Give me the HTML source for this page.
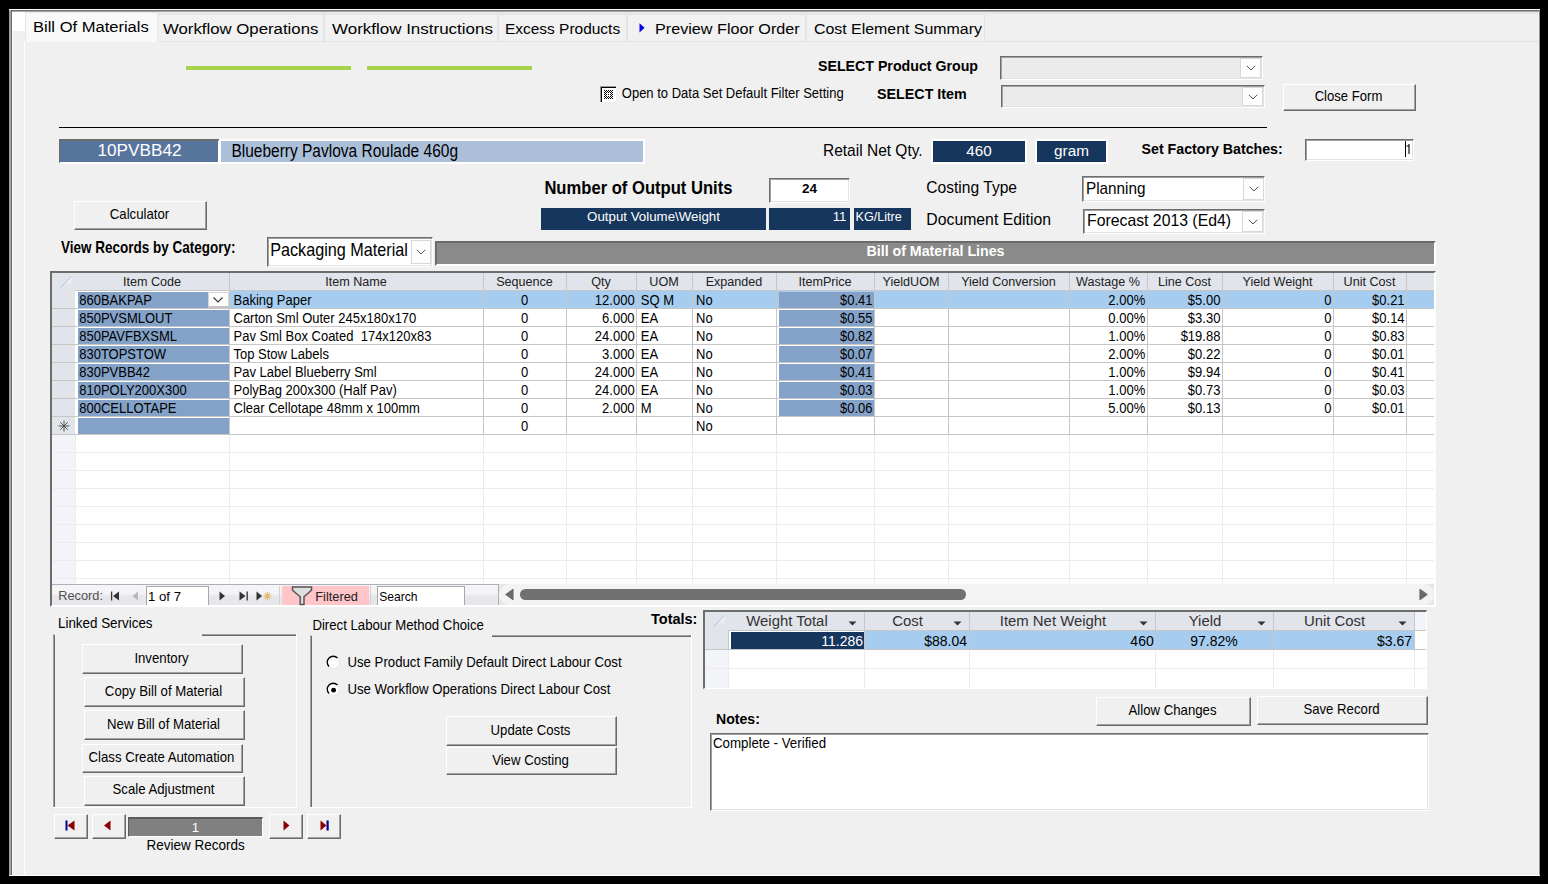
<!DOCTYPE html><html><head><meta charset="utf-8"><style>
html,body{margin:0;padding:0}
body{width:1548px;height:884px;background:#000;position:relative;overflow:hidden;font-family:"Liberation Sans",sans-serif;color:#000}
.a{position:absolute}
.t{position:absolute;white-space:nowrap;line-height:1}
</style></head><body>
<div class="a" style="left:9px;top:9px;width:1531px;height:867px;background:#f0f0f0"></div>
<div class="a" style="left:9px;top:9px;width:1531px;height:1px;background:#fff"></div>
<div class="a" style="left:9px;top:10px;width:1531px;height:1px;background:#6e6e6e"></div>
<div class="a" style="left:9px;top:11px;width:1531px;height:1px;background:#a8a8a8"></div>
<div class="a" style="left:12px;top:12px;width:1527px;height:3px;background:linear-gradient(#e4e4e4,#f0f0f0)"></div>
<div class="a" style="left:9px;top:10px;width:2px;height:866px;background:#a0a0a0"></div>
<div class="a" style="left:11px;top:11px;width:1px;height:865px;background:#6d6d6d"></div>
<div class="a" style="left:12px;top:12px;width:1px;height:863px;background:#f8f8f8"></div>
<div class="a" style="left:1538px;top:12px;width:1px;height:863px;background:#f6f6f6"></div>
<div class="a" style="left:1539px;top:10px;width:1px;height:866px;background:#8c8c8c"></div>
<div class="a" style="left:9px;top:875px;width:1531px;height:1px;background:#fff"></div>
<div class="a" style="left:12px;top:12px;width:13px;height:19px;background:#fff"></div>
<div class="a" style="left:24px;top:41px;width:1515px;height:1px;background:#e3e3e3"></div>
<div class="a" style="left:24px;top:41px;width:1px;height:834px;background:#fff"></div>
<div class="a" style="left:157px;top:14px;width:167px;height:27px;box-sizing:border-box;background:#f1f1f1;border:1px solid #e3e3e3;border-bottom:none"></div>
<div class="t" style="left:162.8px;top:20.03px;font-size:16.2px;transform:scale(1.0363,0.9500);transform-origin:0 13.77px">Workflow Operations</div>
<div class="a" style="left:324px;top:14px;width:174px;height:27px;box-sizing:border-box;background:#f1f1f1;border:1px solid #e3e3e3;border-bottom:none"></div>
<div class="t" style="left:331.7px;top:20.03px;font-size:16.2px;transform:scale(1.0479,0.9500);transform-origin:0 13.77px">Workflow Instructions</div>
<div class="a" style="left:498px;top:14px;width:129px;height:27px;box-sizing:border-box;background:#f1f1f1;border:1px solid #e3e3e3;border-bottom:none"></div>
<div class="t" style="left:505.2px;top:20.03px;font-size:16.2px;transform:scale(0.9549,0.9500);transform-origin:0 13.77px">Excess Products</div>
<div class="a" style="left:627px;top:14px;width:179px;height:27px;box-sizing:border-box;background:#f1f1f1;border:1px solid #e3e3e3;border-bottom:none"></div>
<div class="t" style="left:655.3px;top:20.03px;font-size:16.2px;transform:scale(0.9991,0.9500);transform-origin:0 13.77px">Preview Floor Order</div>
<div class="a" style="left:806px;top:14px;width:179px;height:27px;box-sizing:border-box;background:#f1f1f1;border:1px solid #e3e3e3;border-bottom:none"></div>
<div class="t" style="left:813.6px;top:20.03px;font-size:16.2px;transform:scale(0.9822,0.9500);transform-origin:0 13.77px">Cost Element Summary</div>
<svg class="a" style="left:638.5px;top:22.5px" width="7" height="10"><path d="M0.5 0.3 L5.6 4.8 L0.5 9.4 Z" fill="#0000f0"/></svg>
<div class="a" style="left:25px;top:12px;width:133px;height:30px;box-sizing:border-box;background:#f9f9f9;border:1px solid #e6e6e6;border-bottom:none"></div>
<div class="t" style="left:32.9px;top:18.03px;font-size:16.2px;transform:scale(1.0210,0.9500);transform-origin:0 13.77px">Bill Of Materials</div>
<div class="a" style="left:186px;top:66px;width:165px;height:4px;background:#a6d24c"></div>
<div class="a" style="left:367px;top:66px;width:165px;height:4px;background:#a6d24c"></div>
<div class="t" style="left:818px;top:58.93px;font-size:14.2px;font-weight:bold;transform:scale(1.0000,1.0900);transform-origin:0 12.07px">SELECT Product Group</div>
<div class="a" style="left:1000px;top:56px;width:263px;height:24px;box-sizing:border-box;background:#ebebeb;border-top:1px solid #6d6d6d;border-left:1px solid #6d6d6d;border-right:1px solid #fff;border-bottom:1px solid #fff;box-shadow:inset 1px 1px 0 #a0a0a0,inset -1px -1px 0 #e3e3e3"></div>
<div class="a" style="left:1240px;top:58px;width:21px;height:20px;box-sizing:border-box;background:#fdfdfd;border:1px solid #d9d9d9"></div>
<svg class="a" style="left:1245.5px;top:65.0px" width="10" height="6"><path d="M0.8 0.8 L5 5 L9.2 0.8" fill="none" stroke="#555" stroke-width="1"/></svg>
<div class="a" style="left:600px;top:86px;width:16px;height:16px;box-sizing:border-box;background:#fff;border-top:1px solid #9a9a9a;border-left:1px solid #9a9a9a;box-shadow:inset 1px 1px 0 #000"></div>
<svg class="a" style="left:604px;top:90px" width="9" height="9" fill="#000"><rect x="0" y="0" width="1" height="1"/><rect x="0" y="2" width="1" height="1"/><rect x="0" y="4" width="1" height="1"/><rect x="0" y="6" width="1" height="1"/><rect x="0" y="8" width="1" height="1"/><rect x="1" y="1" width="1" height="1"/><rect x="1" y="3" width="1" height="1"/><rect x="1" y="5" width="1" height="1"/><rect x="1" y="7" width="1" height="1"/><rect x="2" y="0" width="1" height="1"/><rect x="2" y="2" width="1" height="1"/><rect x="2" y="4" width="1" height="1"/><rect x="2" y="6" width="1" height="1"/><rect x="2" y="8" width="1" height="1"/><rect x="3" y="1" width="1" height="1"/><rect x="3" y="7" width="1" height="1"/><rect x="4" y="0" width="1" height="1"/><rect x="4" y="2" width="1" height="1"/><rect x="4" y="4" width="1" height="1"/><rect x="4" y="6" width="1" height="1"/><rect x="4" y="8" width="1" height="1"/><rect x="5" y="1" width="1" height="1"/><rect x="5" y="7" width="1" height="1"/><rect x="6" y="0" width="1" height="1"/><rect x="6" y="2" width="1" height="1"/><rect x="6" y="4" width="1" height="1"/><rect x="6" y="6" width="1" height="1"/><rect x="6" y="8" width="1" height="1"/><rect x="7" y="1" width="1" height="1"/><rect x="7" y="3" width="1" height="1"/><rect x="7" y="5" width="1" height="1"/><rect x="7" y="7" width="1" height="1"/><rect x="8" y="0" width="1" height="1"/><rect x="8" y="2" width="1" height="1"/><rect x="8" y="4" width="1" height="1"/><rect x="8" y="6" width="1" height="1"/><rect x="8" y="8" width="1" height="1"/></svg>
<div class="t" style="left:621.8px;top:87.45px;font-size:13.0px;transform:scale(1.0000,1.1000);transform-origin:0 11.05px">Open to Data Set Default Filter Setting</div>
<div class="t" style="left:877px;top:87.34px;font-size:14.3px;font-weight:bold;transform:scale(1.0000,1.0300);transform-origin:0 12.16px">SELECT Item</div>
<div class="a" style="left:1001px;top:85px;width:264px;height:23px;box-sizing:border-box;background:#ebebeb;border-top:1px solid #6d6d6d;border-left:1px solid #6d6d6d;border-right:1px solid #fff;border-bottom:1px solid #fff;box-shadow:inset 1px 1px 0 #a0a0a0,inset -1px -1px 0 #e3e3e3"></div>
<div class="a" style="left:1242px;top:87px;width:21px;height:19px;box-sizing:border-box;background:#fdfdfd;border:1px solid #d9d9d9"></div>
<svg class="a" style="left:1247.5px;top:93.5px" width="10" height="6"><path d="M0.8 0.8 L5 5 L9.2 0.8" fill="none" stroke="#555" stroke-width="1"/></svg>
<div class="a" style="left:1283px;top:84px;width:133px;height:27px;box-sizing:border-box;background:#f0f0f0;border-top:1px solid #fff;border-left:1px solid #fff;border-right:1px solid #696969;border-bottom:1px solid #696969;box-shadow:inset -1px -1px 0 #a0a0a0"></div>
<div class="t" style="left:1283px;width:131px;text-align:center;top:90.06px;font-size:13.1px;transform:scale(1.0000,1.1000);transform-origin:50% 11.13px">Close Form</div>
<div class="a" style="left:59px;top:127px;width:1208px;height:1px;background:#000"></div>
<div class="a" style="left:59px;top:139px;width:162px;height:25px;box-sizing:border-box;background:#56749c;border-top:2px solid #6d6d6d;border-left:1px solid #6d6d6d;border-bottom:2px solid #fff;border-right:3px solid #fff"></div>
<div class="t" style="left:59px;width:161px;text-align:center;top:142.38px;font-size:17.2px;color:#fff">10PVBB42</div>
<div class="a" style="left:219px;top:139px;width:426px;height:25px;box-sizing:border-box;background:#abbfd9;border:2px solid #fff"></div>
<div class="t" style="left:231.4px;top:144.12px;font-size:15.5px;transform:scale(1.0000,1.1300);transform-origin:0 13.17px">Blueberry Pavlova Roulade 460g</div>
<div class="t" style="left:823px;top:142.82px;font-size:15.5px;transform:scale(1.0000,1.1100);transform-origin:0 13.17px">Retail Net Qty.</div>
<div class="a" style="left:931px;top:139px;width:96px;height:25px;box-sizing:border-box;background:#17365d;border:2px solid #fff"></div>
<div class="t" style="left:931px;width:96px;text-align:center;top:143.48px;font-size:15.2px;color:#fff">460</div>
<div class="a" style="left:1035px;top:139px;width:73px;height:25px;box-sizing:border-box;background:#17365d;border:2px solid #fff"></div>
<div class="t" style="left:1035px;width:73px;text-align:center;top:143.40px;font-size:15.3px;color:#fff">gram</div>
<div class="t" style="left:1141.6px;top:142.43px;font-size:14.2px;font-weight:bold;transform:scale(1.0000,1.0400);transform-origin:0 12.07px">Set Factory Batches:</div>
<div class="a" style="left:1305px;top:139px;width:109px;height:22px;box-sizing:border-box;background:#fff;border-top:1px solid #6d6d6d;border-left:1px solid #6d6d6d;border-right:1px solid #fff;border-bottom:1px solid #fff;box-shadow:inset 1px 1px 0 #a0a0a0,inset -1px -1px 0 #e3e3e3"></div>
<div class="a" style="left:1405px;top:141px;width:1px;height:16px;background:#000"></div>
<svg class="a" style="left:1404px;top:143px" width="8" height="13"><path d="M5 1 V11 M2.5 3 H5" stroke="#000" stroke-width="1.1" fill="none"/></svg>
<div class="t" style="left:544.4px;top:181.09px;font-size:16.6px;font-weight:bold;transform:scale(1.0000,1.0600);transform-origin:0 14.11px">Number of Output Units</div>
<div class="a" style="left:769px;top:178px;width:81px;height:25px;box-sizing:border-box;background:#fff;border-top:1px solid #6d6d6d;border-left:1px solid #6d6d6d;border-right:1px solid #fff;border-bottom:1px solid #fff;box-shadow:inset 1px 1px 0 #a0a0a0,inset -1px -1px 0 #e3e3e3"></div>
<div class="t" style="left:769px;width:81px;text-align:center;top:181.72px;font-size:13.5px;font-weight:bold">24</div>
<div class="a" style="left:541px;top:208px;width:225px;height:22px;background:#17365d"></div>
<div class="t" style="left:541px;width:225px;text-align:center;top:209.69px;font-size:13.3px;color:#fff">Output Volume\Weight</div>
<div class="a" style="left:769px;top:208px;width:81px;height:22px;background:#17365d"></div>
<div class="t" style="right:701.5px;top:209.69px;font-size:13.3px;color:#fff">11</div>
<div class="a" style="left:854px;top:208px;width:57px;height:22px;background:#17365d"></div>
<div class="t" style="left:855.5px;top:211.09px;font-size:12.6px;color:#fff">KG/Litre</div>
<div class="t" style="left:926.3px;top:179.94px;font-size:15.6px;transform:scale(1.0000,1.0400);transform-origin:0 13.26px">Costing Type</div>
<div class="t" style="left:926.3px;top:212.27px;font-size:15.8px;transform:scale(1.0000,1.0500);transform-origin:0 13.43px">Document Edition</div>
<div class="a" style="left:1082px;top:176px;width:183px;height:26px;box-sizing:border-box;background:#fff;border-top:1px solid #6d6d6d;border-left:1px solid #6d6d6d;border-right:1px solid #fff;border-bottom:1px solid #fff;box-shadow:inset 1px 1px 0 #a0a0a0,inset -1px -1px 0 #e3e3e3"></div>
<div class="t" style="left:1086px;top:180.90px;font-size:15.3px;transform:scale(1.0000,1.0300);transform-origin:0 13.01px">Planning</div>
<div class="a" style="left:1243px;top:178px;width:21px;height:22px;box-sizing:border-box;background:#fdfdfd;border:1px solid #d9d9d9"></div>
<svg class="a" style="left:1248.5px;top:186.0px" width="10" height="6"><path d="M0.8 0.8 L5 5 L9.2 0.8" fill="none" stroke="#555" stroke-width="1"/></svg>
<div class="a" style="left:1083px;top:209px;width:182px;height:25px;box-sizing:border-box;background:#fff;border-top:1px solid #6d6d6d;border-left:1px solid #6d6d6d;border-right:1px solid #fff;border-bottom:1px solid #fff;box-shadow:inset 1px 1px 0 #a0a0a0,inset -1px -1px 0 #e3e3e3"></div>
<div class="t" style="left:1087px;top:212.77px;font-size:15.8px;transform:scale(1.0000,1.0300);transform-origin:0 13.43px">Forecast 2013 (Ed4)</div>
<div class="a" style="left:1242px;top:211px;width:21px;height:21px;box-sizing:border-box;background:#fdfdfd;border:1px solid #d9d9d9"></div>
<svg class="a" style="left:1247.5px;top:218.5px" width="10" height="6"><path d="M0.8 0.8 L5 5 L9.2 0.8" fill="none" stroke="#555" stroke-width="1"/></svg>
<div class="a" style="left:74px;top:201px;width:133px;height:29px;box-sizing:border-box;background:#f0f0f0;border-top:1px solid #fff;border-left:1px solid #fff;border-right:1px solid #696969;border-bottom:1px solid #696969;box-shadow:inset -1px -1px 0 #a0a0a0"></div>
<div class="t" style="left:74px;width:131px;text-align:center;top:207.78px;font-size:13.2px;transform:scale(1.0000,1.0700);transform-origin:50% 11.22px">Calculator</div>
<div class="t" style="left:61px;top:241.53px;font-size:13.5px;font-weight:bold;transform:scale(1.0000,1.1800);transform-origin:0 11.47px">View Records by Category:</div>
<div class="a" style="left:267px;top:237px;width:166px;height:30px;box-sizing:border-box;background:#fff;border-top:1px solid #6d6d6d;border-left:1px solid #6d6d6d;border-right:1px solid #fff;border-bottom:1px solid #fff;box-shadow:inset 1px 1px 0 #a0a0a0,inset -1px -1px 0 #e3e3e3"></div>
<div class="t" style="left:270.2px;top:241.93px;font-size:16.2px;transform:scale(1.0000,1.0800);transform-origin:0 13.77px">Packaging Material</div>
<div class="a" style="left:411px;top:240px;width:20px;height:24px;box-sizing:border-box;background:#fdfdfd;border:1px solid #d9d9d9"></div>
<svg class="a" style="left:416.0px;top:249.0px" width="10" height="6"><path d="M0.8 0.8 L5 5 L9.2 0.8" fill="none" stroke="#555" stroke-width="1"/></svg>
<div class="a" style="left:435px;top:241px;width:1001px;height:25px;box-sizing:border-box;background:#8a8a8a;border-top:2px solid #6a6a6a;border-left:2px solid #6a6a6a;border-bottom:2px solid #fff;border-right:2px solid #fff"></div>
<div class="t" style="left:435px;width:1001px;text-align:center;top:243.93px;font-size:14.2px;font-weight:bold;color:#fff;transform:scale(1.0000,1.0500);transform-origin:50% 12.07px">Bill of Material Lines</div>
<div class="a" style="left:50px;top:271px;width:1386px;height:336px;box-sizing:border-box;background:#fff;border-top:2px solid #6d6d6d;border-left:2px solid #6d6d6d;border-right:2px solid #fff;border-bottom:2px solid #fff"></div>
<div class="a" style="left:52px;top:273px;width:1382px;height:17px;background:#e1e4ea"></div>
<div class="a" style="left:52px;top:290px;width:23px;height:144px;background:#e1e4ea"></div>
<div class="a" style="left:52px;top:435px;width:23px;height:149px;background:#f3f4fa"></div>
<div class="a" style="left:229px;top:291px;width:1205px;height:17px;background:#a6cdf0"></div>
<div class="a" style="left:75px;top:290px;width:1359px;height:1px;background:#c6c6c6"></div>
<div class="a" style="left:52px;top:308px;width:1382px;height:1px;background:#c6c6c6"></div>
<div class="a" style="left:52px;top:326px;width:1382px;height:1px;background:#c6c6c6"></div>
<div class="a" style="left:52px;top:344px;width:1382px;height:1px;background:#c6c6c6"></div>
<div class="a" style="left:52px;top:362px;width:1382px;height:1px;background:#c6c6c6"></div>
<div class="a" style="left:52px;top:380px;width:1382px;height:1px;background:#c6c6c6"></div>
<div class="a" style="left:52px;top:398px;width:1382px;height:1px;background:#c6c6c6"></div>
<div class="a" style="left:52px;top:416px;width:1382px;height:1px;background:#c6c6c6"></div>
<div class="a" style="left:52px;top:434px;width:1382px;height:1px;background:#c6c6c6"></div>
<div class="a" style="left:52px;top:452px;width:1382px;height:1px;background:#ececec"></div>
<div class="a" style="left:52px;top:470px;width:1382px;height:1px;background:#ececec"></div>
<div class="a" style="left:52px;top:488px;width:1382px;height:1px;background:#ececec"></div>
<div class="a" style="left:52px;top:506px;width:1382px;height:1px;background:#ececec"></div>
<div class="a" style="left:52px;top:524px;width:1382px;height:1px;background:#ececec"></div>
<div class="a" style="left:52px;top:542px;width:1382px;height:1px;background:#ececec"></div>
<div class="a" style="left:52px;top:560px;width:1382px;height:1px;background:#ececec"></div>
<div class="a" style="left:52px;top:578px;width:1382px;height:1px;background:#ececec"></div>
<div class="a" style="left:229px;top:273px;width:1px;height:161px;background:#c6c6c6"></div>
<div class="a" style="left:483px;top:273px;width:1px;height:161px;background:#c6c6c6"></div>
<div class="a" style="left:566px;top:273px;width:1px;height:161px;background:#c6c6c6"></div>
<div class="a" style="left:636px;top:273px;width:1px;height:161px;background:#c6c6c6"></div>
<div class="a" style="left:692px;top:273px;width:1px;height:161px;background:#c6c6c6"></div>
<div class="a" style="left:776px;top:273px;width:1px;height:161px;background:#c6c6c6"></div>
<div class="a" style="left:874px;top:273px;width:1px;height:161px;background:#c6c6c6"></div>
<div class="a" style="left:948px;top:273px;width:1px;height:161px;background:#c6c6c6"></div>
<div class="a" style="left:1069px;top:273px;width:1px;height:161px;background:#c6c6c6"></div>
<div class="a" style="left:1147px;top:273px;width:1px;height:161px;background:#c6c6c6"></div>
<div class="a" style="left:1222px;top:273px;width:1px;height:161px;background:#c6c6c6"></div>
<div class="a" style="left:1333px;top:273px;width:1px;height:161px;background:#c6c6c6"></div>
<div class="a" style="left:1406px;top:273px;width:1px;height:161px;background:#c6c6c6"></div>
<div class="a" style="left:75px;top:290px;width:1px;height:144px;background:#c6c6c6"></div>
<div class="a" style="left:75px;top:435px;width:1px;height:149px;background:#ececec"></div>
<div class="a" style="left:229px;top:435px;width:1px;height:149px;background:#ececec"></div>
<div class="a" style="left:483px;top:435px;width:1px;height:149px;background:#ececec"></div>
<div class="a" style="left:566px;top:435px;width:1px;height:149px;background:#ececec"></div>
<div class="a" style="left:636px;top:435px;width:1px;height:149px;background:#ececec"></div>
<div class="a" style="left:692px;top:435px;width:1px;height:149px;background:#ececec"></div>
<div class="a" style="left:776px;top:435px;width:1px;height:149px;background:#ececec"></div>
<div class="a" style="left:874px;top:435px;width:1px;height:149px;background:#ececec"></div>
<div class="a" style="left:948px;top:435px;width:1px;height:149px;background:#ececec"></div>
<div class="a" style="left:1069px;top:435px;width:1px;height:149px;background:#ececec"></div>
<div class="a" style="left:1147px;top:435px;width:1px;height:149px;background:#ececec"></div>
<div class="a" style="left:1222px;top:435px;width:1px;height:149px;background:#ececec"></div>
<div class="a" style="left:1333px;top:435px;width:1px;height:149px;background:#ececec"></div>
<div class="a" style="left:1406px;top:435px;width:1px;height:149px;background:#ececec"></div>
<div class="t" style="left:75px;width:154px;text-align:center;top:275.59px;font-size:12.6px;color:#222;transform:scale(1.0000,1.0500);transform-origin:50% 10.71px">Item Code</div>
<div class="t" style="left:229px;width:254px;text-align:center;top:275.59px;font-size:12.6px;color:#222;transform:scale(1.0000,1.0500);transform-origin:50% 10.71px">Item Name</div>
<div class="t" style="left:483px;width:83px;text-align:center;top:275.59px;font-size:12.6px;color:#222;transform:scale(1.0000,1.0500);transform-origin:50% 10.71px">Sequence</div>
<div class="t" style="left:566px;width:70px;text-align:center;top:275.59px;font-size:12.6px;color:#222;transform:scale(1.0000,1.0500);transform-origin:50% 10.71px">Qty</div>
<div class="t" style="left:636px;width:56px;text-align:center;top:275.59px;font-size:12.6px;color:#222;transform:scale(1.0000,1.0500);transform-origin:50% 10.71px">UOM</div>
<div class="t" style="left:692px;width:84px;text-align:center;top:275.59px;font-size:12.6px;color:#222;transform:scale(1.0000,1.0500);transform-origin:50% 10.71px">Expanded</div>
<div class="t" style="left:776px;width:98px;text-align:center;top:275.59px;font-size:12.6px;color:#222;transform:scale(1.0000,1.0500);transform-origin:50% 10.71px">ItemPrice</div>
<div class="t" style="left:874px;width:74px;text-align:center;top:275.59px;font-size:12.6px;color:#222;transform:scale(1.0000,1.0500);transform-origin:50% 10.71px">YieldUOM</div>
<div class="t" style="left:948px;width:121px;text-align:center;top:275.59px;font-size:12.6px;color:#222;transform:scale(1.0000,1.0500);transform-origin:50% 10.71px">Yield Conversion</div>
<div class="t" style="left:1069px;width:78px;text-align:center;top:275.59px;font-size:12.6px;color:#222;transform:scale(1.0000,1.0500);transform-origin:50% 10.71px">Wastage %</div>
<div class="t" style="left:1147px;width:75px;text-align:center;top:275.59px;font-size:12.6px;color:#222;transform:scale(1.0000,1.0500);transform-origin:50% 10.71px">Line Cost</div>
<div class="t" style="left:1222px;width:111px;text-align:center;top:275.59px;font-size:12.6px;color:#222;transform:scale(1.0000,1.0500);transform-origin:50% 10.71px">Yield Weight</div>
<div class="t" style="left:1333px;width:73px;text-align:center;top:275.59px;font-size:12.6px;color:#222;transform:scale(1.0000,1.0500);transform-origin:50% 10.71px">Unit Cost</div>
<svg class="a" style="left:60px;top:276px" width="12" height="12"><defs><linearGradient id="cg" x1="0" y1="0" x2="0" y2="1"><stop offset="0" stop-color="#fbfbfc"/><stop offset="1" stop-color="#dfe2e8"/></linearGradient></defs><path d="M11.5 0.5 L11.5 11 L0.5 11 Z" fill="url(#cg)"/><path d="M11.5 0.5 L0.5 11.5" stroke="#a9c6ee" stroke-width="1"/></svg>
<div class="a" style="left:75px;top:291px;width:154px;height:17px;background:#fff"></div>
<div class="a" style="left:78px;top:292px;width:151px;height:16px;background:#84a2c8"></div>
<div class="a" style="left:779px;top:292px;width:95px;height:16px;background:#84a2c8"></div>
<div class="t" style="left:79.2px;top:293.75px;font-size:13.0px;transform:scale(1.0000,1.0800);transform-origin:0 11.05px">860BAKPAP</div>
<div class="t" style="left:233.5px;top:293.75px;font-size:13.0px;transform:scale(1.0000,1.0800);transform-origin:0 11.05px">Baking Paper</div>
<div class="t" style="left:483px;width:83px;text-align:center;top:293.75px;font-size:13.0px;transform:scale(1.0000,1.0800);transform-origin:50% 11.05px">0</div>
<div class="t" style="right:913.4px;top:293.75px;font-size:13.0px;transform:scale(1.0000,1.0800);transform-origin:100% 11.05px">12.000</div>
<div class="t" style="left:640.8px;top:293.75px;font-size:13.0px;transform:scale(1.0000,1.0800);transform-origin:0 11.05px">SQ M</div>
<div class="t" style="left:696px;top:293.75px;font-size:13.0px;transform:scale(1.0000,1.0800);transform-origin:0 11.05px">No</div>
<div class="t" style="right:675.5px;top:293.75px;font-size:13.0px;transform:scale(1.0000,1.0800);transform-origin:100% 11.05px">$0.41</div>
<div class="t" style="right:402.79999999999995px;top:293.75px;font-size:13.0px;transform:scale(1.0000,1.0800);transform-origin:100% 11.05px">2.00%</div>
<div class="t" style="right:327.5999999999999px;top:293.75px;font-size:13.0px;transform:scale(1.0000,1.0800);transform-origin:100% 11.05px">$5.00</div>
<div class="t" style="right:216.5999999999999px;top:293.75px;font-size:13.0px;transform:scale(1.0000,1.0800);transform-origin:100% 11.05px">0</div>
<div class="t" style="right:143.4000000000001px;top:293.75px;font-size:13.0px;transform:scale(1.0000,1.0800);transform-origin:100% 11.05px">$0.21</div>
<div class="a" style="left:75px;top:309px;width:154px;height:17px;background:#fff"></div>
<div class="a" style="left:78px;top:310px;width:151px;height:16px;background:#84a2c8"></div>
<div class="a" style="left:779px;top:310px;width:95px;height:16px;background:#84a2c8"></div>
<div class="t" style="left:79.2px;top:311.75px;font-size:13.0px;transform:scale(1.0000,1.0800);transform-origin:0 11.05px">850PVSMLOUT</div>
<div class="t" style="left:233.5px;top:311.75px;font-size:13.0px;transform:scale(1.0000,1.0800);transform-origin:0 11.05px">Carton Sml Outer 245x180x170</div>
<div class="t" style="left:483px;width:83px;text-align:center;top:311.75px;font-size:13.0px;transform:scale(1.0000,1.0800);transform-origin:50% 11.05px">0</div>
<div class="t" style="right:913.4px;top:311.75px;font-size:13.0px;transform:scale(1.0000,1.0800);transform-origin:100% 11.05px">6.000</div>
<div class="t" style="left:640.8px;top:311.75px;font-size:13.0px;transform:scale(1.0000,1.0800);transform-origin:0 11.05px">EA</div>
<div class="t" style="left:696px;top:311.75px;font-size:13.0px;transform:scale(1.0000,1.0800);transform-origin:0 11.05px">No</div>
<div class="t" style="right:675.5px;top:311.75px;font-size:13.0px;transform:scale(1.0000,1.0800);transform-origin:100% 11.05px">$0.55</div>
<div class="t" style="right:402.79999999999995px;top:311.75px;font-size:13.0px;transform:scale(1.0000,1.0800);transform-origin:100% 11.05px">0.00%</div>
<div class="t" style="right:327.5999999999999px;top:311.75px;font-size:13.0px;transform:scale(1.0000,1.0800);transform-origin:100% 11.05px">$3.30</div>
<div class="t" style="right:216.5999999999999px;top:311.75px;font-size:13.0px;transform:scale(1.0000,1.0800);transform-origin:100% 11.05px">0</div>
<div class="t" style="right:143.4000000000001px;top:311.75px;font-size:13.0px;transform:scale(1.0000,1.0800);transform-origin:100% 11.05px">$0.14</div>
<div class="a" style="left:75px;top:327px;width:154px;height:17px;background:#fff"></div>
<div class="a" style="left:78px;top:328px;width:151px;height:16px;background:#84a2c8"></div>
<div class="a" style="left:779px;top:328px;width:95px;height:16px;background:#84a2c8"></div>
<div class="t" style="left:79.2px;top:329.75px;font-size:13.0px;transform:scale(1.0000,1.0800);transform-origin:0 11.05px">850PAVFBXSML</div>
<div class="t" style="left:233.5px;top:329.75px;font-size:13.0px;transform:scale(1.0000,1.0800);transform-origin:0 11.05px">Pav Sml Box Coated&nbsp; 174x120x83</div>
<div class="t" style="left:483px;width:83px;text-align:center;top:329.75px;font-size:13.0px;transform:scale(1.0000,1.0800);transform-origin:50% 11.05px">0</div>
<div class="t" style="right:913.4px;top:329.75px;font-size:13.0px;transform:scale(1.0000,1.0800);transform-origin:100% 11.05px">24.000</div>
<div class="t" style="left:640.8px;top:329.75px;font-size:13.0px;transform:scale(1.0000,1.0800);transform-origin:0 11.05px">EA</div>
<div class="t" style="left:696px;top:329.75px;font-size:13.0px;transform:scale(1.0000,1.0800);transform-origin:0 11.05px">No</div>
<div class="t" style="right:675.5px;top:329.75px;font-size:13.0px;transform:scale(1.0000,1.0800);transform-origin:100% 11.05px">$0.82</div>
<div class="t" style="right:402.79999999999995px;top:329.75px;font-size:13.0px;transform:scale(1.0000,1.0800);transform-origin:100% 11.05px">1.00%</div>
<div class="t" style="right:327.5999999999999px;top:329.75px;font-size:13.0px;transform:scale(1.0000,1.0800);transform-origin:100% 11.05px">$19.88</div>
<div class="t" style="right:216.5999999999999px;top:329.75px;font-size:13.0px;transform:scale(1.0000,1.0800);transform-origin:100% 11.05px">0</div>
<div class="t" style="right:143.4000000000001px;top:329.75px;font-size:13.0px;transform:scale(1.0000,1.0800);transform-origin:100% 11.05px">$0.83</div>
<div class="a" style="left:75px;top:345px;width:154px;height:17px;background:#fff"></div>
<div class="a" style="left:78px;top:346px;width:151px;height:16px;background:#84a2c8"></div>
<div class="a" style="left:779px;top:346px;width:95px;height:16px;background:#84a2c8"></div>
<div class="t" style="left:79.2px;top:347.75px;font-size:13.0px;transform:scale(1.0000,1.0800);transform-origin:0 11.05px">830TOPSTOW</div>
<div class="t" style="left:233.5px;top:347.75px;font-size:13.0px;transform:scale(1.0000,1.0800);transform-origin:0 11.05px">Top Stow Labels</div>
<div class="t" style="left:483px;width:83px;text-align:center;top:347.75px;font-size:13.0px;transform:scale(1.0000,1.0800);transform-origin:50% 11.05px">0</div>
<div class="t" style="right:913.4px;top:347.75px;font-size:13.0px;transform:scale(1.0000,1.0800);transform-origin:100% 11.05px">3.000</div>
<div class="t" style="left:640.8px;top:347.75px;font-size:13.0px;transform:scale(1.0000,1.0800);transform-origin:0 11.05px">EA</div>
<div class="t" style="left:696px;top:347.75px;font-size:13.0px;transform:scale(1.0000,1.0800);transform-origin:0 11.05px">No</div>
<div class="t" style="right:675.5px;top:347.75px;font-size:13.0px;transform:scale(1.0000,1.0800);transform-origin:100% 11.05px">$0.07</div>
<div class="t" style="right:402.79999999999995px;top:347.75px;font-size:13.0px;transform:scale(1.0000,1.0800);transform-origin:100% 11.05px">2.00%</div>
<div class="t" style="right:327.5999999999999px;top:347.75px;font-size:13.0px;transform:scale(1.0000,1.0800);transform-origin:100% 11.05px">$0.22</div>
<div class="t" style="right:216.5999999999999px;top:347.75px;font-size:13.0px;transform:scale(1.0000,1.0800);transform-origin:100% 11.05px">0</div>
<div class="t" style="right:143.4000000000001px;top:347.75px;font-size:13.0px;transform:scale(1.0000,1.0800);transform-origin:100% 11.05px">$0.01</div>
<div class="a" style="left:75px;top:363px;width:154px;height:17px;background:#fff"></div>
<div class="a" style="left:78px;top:364px;width:151px;height:16px;background:#84a2c8"></div>
<div class="a" style="left:779px;top:364px;width:95px;height:16px;background:#84a2c8"></div>
<div class="t" style="left:79.2px;top:365.75px;font-size:13.0px;transform:scale(1.0000,1.0800);transform-origin:0 11.05px">830PVBB42</div>
<div class="t" style="left:233.5px;top:365.75px;font-size:13.0px;transform:scale(1.0000,1.0800);transform-origin:0 11.05px">Pav Label Blueberry Sml</div>
<div class="t" style="left:483px;width:83px;text-align:center;top:365.75px;font-size:13.0px;transform:scale(1.0000,1.0800);transform-origin:50% 11.05px">0</div>
<div class="t" style="right:913.4px;top:365.75px;font-size:13.0px;transform:scale(1.0000,1.0800);transform-origin:100% 11.05px">24.000</div>
<div class="t" style="left:640.8px;top:365.75px;font-size:13.0px;transform:scale(1.0000,1.0800);transform-origin:0 11.05px">EA</div>
<div class="t" style="left:696px;top:365.75px;font-size:13.0px;transform:scale(1.0000,1.0800);transform-origin:0 11.05px">No</div>
<div class="t" style="right:675.5px;top:365.75px;font-size:13.0px;transform:scale(1.0000,1.0800);transform-origin:100% 11.05px">$0.41</div>
<div class="t" style="right:402.79999999999995px;top:365.75px;font-size:13.0px;transform:scale(1.0000,1.0800);transform-origin:100% 11.05px">1.00%</div>
<div class="t" style="right:327.5999999999999px;top:365.75px;font-size:13.0px;transform:scale(1.0000,1.0800);transform-origin:100% 11.05px">$9.94</div>
<div class="t" style="right:216.5999999999999px;top:365.75px;font-size:13.0px;transform:scale(1.0000,1.0800);transform-origin:100% 11.05px">0</div>
<div class="t" style="right:143.4000000000001px;top:365.75px;font-size:13.0px;transform:scale(1.0000,1.0800);transform-origin:100% 11.05px">$0.41</div>
<div class="a" style="left:75px;top:381px;width:154px;height:17px;background:#fff"></div>
<div class="a" style="left:78px;top:382px;width:151px;height:16px;background:#84a2c8"></div>
<div class="a" style="left:779px;top:382px;width:95px;height:16px;background:#84a2c8"></div>
<div class="t" style="left:79.2px;top:383.75px;font-size:13.0px;transform:scale(1.0000,1.0800);transform-origin:0 11.05px">810POLY200X300</div>
<div class="t" style="left:233.5px;top:383.75px;font-size:13.0px;transform:scale(1.0000,1.0800);transform-origin:0 11.05px">PolyBag 200x300 (Half Pav)</div>
<div class="t" style="left:483px;width:83px;text-align:center;top:383.75px;font-size:13.0px;transform:scale(1.0000,1.0800);transform-origin:50% 11.05px">0</div>
<div class="t" style="right:913.4px;top:383.75px;font-size:13.0px;transform:scale(1.0000,1.0800);transform-origin:100% 11.05px">24.000</div>
<div class="t" style="left:640.8px;top:383.75px;font-size:13.0px;transform:scale(1.0000,1.0800);transform-origin:0 11.05px">EA</div>
<div class="t" style="left:696px;top:383.75px;font-size:13.0px;transform:scale(1.0000,1.0800);transform-origin:0 11.05px">No</div>
<div class="t" style="right:675.5px;top:383.75px;font-size:13.0px;transform:scale(1.0000,1.0800);transform-origin:100% 11.05px">$0.03</div>
<div class="t" style="right:402.79999999999995px;top:383.75px;font-size:13.0px;transform:scale(1.0000,1.0800);transform-origin:100% 11.05px">1.00%</div>
<div class="t" style="right:327.5999999999999px;top:383.75px;font-size:13.0px;transform:scale(1.0000,1.0800);transform-origin:100% 11.05px">$0.73</div>
<div class="t" style="right:216.5999999999999px;top:383.75px;font-size:13.0px;transform:scale(1.0000,1.0800);transform-origin:100% 11.05px">0</div>
<div class="t" style="right:143.4000000000001px;top:383.75px;font-size:13.0px;transform:scale(1.0000,1.0800);transform-origin:100% 11.05px">$0.03</div>
<div class="a" style="left:75px;top:399px;width:154px;height:17px;background:#fff"></div>
<div class="a" style="left:78px;top:400px;width:151px;height:16px;background:#84a2c8"></div>
<div class="a" style="left:779px;top:400px;width:95px;height:16px;background:#84a2c8"></div>
<div class="t" style="left:79.2px;top:401.75px;font-size:13.0px;transform:scale(1.0000,1.0800);transform-origin:0 11.05px">800CELLOTAPE</div>
<div class="t" style="left:233.5px;top:401.75px;font-size:13.0px;transform:scale(1.0000,1.0800);transform-origin:0 11.05px">Clear Cellotape 48mm x 100mm</div>
<div class="t" style="left:483px;width:83px;text-align:center;top:401.75px;font-size:13.0px;transform:scale(1.0000,1.0800);transform-origin:50% 11.05px">0</div>
<div class="t" style="right:913.4px;top:401.75px;font-size:13.0px;transform:scale(1.0000,1.0800);transform-origin:100% 11.05px">2.000</div>
<div class="t" style="left:640.8px;top:401.75px;font-size:13.0px;transform:scale(1.0000,1.0800);transform-origin:0 11.05px">M</div>
<div class="t" style="left:696px;top:401.75px;font-size:13.0px;transform:scale(1.0000,1.0800);transform-origin:0 11.05px">No</div>
<div class="t" style="right:675.5px;top:401.75px;font-size:13.0px;transform:scale(1.0000,1.0800);transform-origin:100% 11.05px">$0.06</div>
<div class="t" style="right:402.79999999999995px;top:401.75px;font-size:13.0px;transform:scale(1.0000,1.0800);transform-origin:100% 11.05px">5.00%</div>
<div class="t" style="right:327.5999999999999px;top:401.75px;font-size:13.0px;transform:scale(1.0000,1.0800);transform-origin:100% 11.05px">$0.13</div>
<div class="t" style="right:216.5999999999999px;top:401.75px;font-size:13.0px;transform:scale(1.0000,1.0800);transform-origin:100% 11.05px">0</div>
<div class="t" style="right:143.4000000000001px;top:401.75px;font-size:13.0px;transform:scale(1.0000,1.0800);transform-origin:100% 11.05px">$0.01</div>
<div class="a" style="left:208px;top:292px;width:21px;height:16px;background:#fdfdfd;box-sizing:border-box;border:1px solid #d4d4d4;border-bottom:2px solid #c4c4c4"></div>
<svg class="a" style="left:212px;top:296px" width="12" height="8"><path d="M1.5 1.5 L6 6 L10.5 1.5" fill="none" stroke="#333" stroke-width="1.1"/></svg>
<div class="a" style="left:75px;top:417px;width:154px;height:17px;background:#fff"></div>
<div class="a" style="left:78px;top:418px;width:151px;height:16px;background:#84a2c8"></div>
<div class="t" style="left:483px;width:83px;text-align:center;top:419.75px;font-size:13.0px;transform:scale(1.0000,1.0800);transform-origin:50% 11.05px">0</div>
<div class="t" style="left:696px;top:419.75px;font-size:13.0px;transform:scale(1.0000,1.0800);transform-origin:0 11.05px">No</div>
<svg class="a" style="left:57px;top:419px" width="14" height="14"><path d="M7 1.5 V12.5 M1.5 7 H12.5 M3.2 3.2 L10.8 10.8 M10.8 3.2 L3.2 10.8" stroke="#444" stroke-width="0.9"/></svg>
<div class="a" style="left:52px;top:584px;width:447px;height:21px;background:linear-gradient(#f4f4f6,#f4f4f6 45%,#e6e7ea 55%,#e6e7ea);border-top:1px solid #acb0b9;border-right:1px solid #acb0b9;box-sizing:border-box"></div>
<div class="t" style="left:58.2px;top:590.42px;font-size:12.8px;color:#505050">Record:</div>
<svg class="a" style="left:110px;top:591px" width="10" height="10"><path d="M1.6 0.5 V9.5" stroke="#333" stroke-width="1.3"/><path d="M9 0.5 L3 5 L9 9.5 Z" fill="#333"/></svg>
<svg class="a" style="left:132px;top:591px" width="7" height="10"><path d="M6 0.5 L0.5 5 L6 9.5 Z" fill="#b8b8b8"/></svg>
<div class="a" style="left:146px;top:586px;width:63px;height:19px;box-sizing:border-box;background:#fff;border:1px solid #a8a8a8;border-bottom:none"></div>
<div class="t" style="left:148px;top:590.28px;font-size:13.2px">1 of 7</div>
<svg class="a" style="left:219px;top:591px" width="7" height="10"><path d="M0.5 0.5 L6 5 L0.5 9.5 Z" fill="#333"/></svg>
<svg class="a" style="left:239px;top:591px" width="10" height="10"><path d="M0.5 0.5 L6.5 5 L0.5 9.5 Z" fill="#333"/><path d="M8.2 0.5 V9.5" stroke="#333" stroke-width="1.3"/></svg>
<svg class="a" style="left:256px;top:591px" width="17" height="10"><path d="M0.5 0.5 L6 5 L0.5 9.5 Z" fill="#333"/><path d="M11.5 1 V9 M7.5 5 H15.5 M8.7 2.2 L14.3 7.8 M14.3 2.2 L8.7 7.8" stroke="#e5b56a" stroke-width="1.1"/></svg>
<div class="a" style="left:279px;top:586px;width:1px;height:19px;background:#d0d2d8"></div>
<div class="a" style="left:282px;top:586px;width:87px;height:19px;background:#ffc5c9"></div>
<svg class="a" style="left:291px;top:586px" width="22" height="20"><path d="M1.5 1 H20.5 V4.2 L13 10.8 V18.6 H9.2 V10.8 L1.5 4.2 Z" fill="#dedede" stroke="#555" stroke-width="1.5" stroke-linejoin="miter"/></svg>
<div class="t" style="left:315.3px;top:590.62px;font-size:12.8px;color:#222">Filtered</div>
<div class="a" style="left:370px;top:586px;width:1px;height:19px;background:#d0d2d8"></div>
<div class="a" style="left:377px;top:586px;width:88px;height:19px;box-sizing:border-box;background:#fff;border:1px solid #a8a8a8;border-bottom:none"></div>
<div class="t" style="left:379.2px;top:591.22px;font-size:12.1px">Search</div>
<div class="a" style="left:499px;top:584px;width:935px;height:21px;background:#e6e6e6"></div>
<div class="a" style="left:499px;top:584px;width:935px;height:21px;background:#f3f3f3;border-radius:11px"></div>
<svg class="a" style="left:504px;top:588px" width="11" height="13"><path d="M2 6.5 L9 1.5 V11.5 Z" fill="#6a6a6a" stroke="#6a6a6a" stroke-width="1.2" stroke-linejoin="round"/></svg>
<div class="a" style="left:520px;top:589px;width:446px;height:11px;background:#707070;border-radius:5.5px"></div>
<svg class="a" style="left:1418px;top:588px" width="11" height="13"><path d="M9 6.5 L2 1.5 V11.5 Z" fill="#6a6a6a" stroke="#6a6a6a" stroke-width="1.2" stroke-linejoin="round"/></svg>
<div class="t" style="left:58px;top:616.61px;font-size:13.4px;transform:scale(1.0000,1.0800);transform-origin:0 11.39px">Linked Services</div>
<div class="a" style="left:202px;top:634px;width:94px;height:1px;background:#a0a0a0"></div>
<div class="a" style="left:202px;top:635px;width:94px;height:1px;background:#696969"></div>
<div class="a" style="left:53px;top:634px;width:1px;height:173px;background:#a0a0a0"></div>
<div class="a" style="left:54px;top:635px;width:1px;height:172px;background:#696969"></div>
<div class="a" style="left:296px;top:634px;width:1px;height:174px;background:#fff"></div>
<div class="a" style="left:53px;top:807px;width:244px;height:1px;background:#fff"></div>
<div class="a" style="left:82px;top:644px;width:161px;height:30px;box-sizing:border-box;background:#f0f0f0;border-top:1px solid #fff;border-left:1px solid #fff;border-right:1px solid #696969;border-bottom:1px solid #696969;box-shadow:inset -1px -1px 0 #a0a0a0"></div>
<div class="t" style="left:82px;width:159px;text-align:center;top:652.28px;font-size:13.2px;transform:scale(1.0000,1.1000);transform-origin:50% 11.22px">Inventory</div>
<div class="a" style="left:84px;top:677px;width:161px;height:30px;box-sizing:border-box;background:#f0f0f0;border-top:1px solid #fff;border-left:1px solid #fff;border-right:1px solid #696969;border-bottom:1px solid #696969;box-shadow:inset -1px -1px 0 #a0a0a0"></div>
<div class="t" style="left:84px;width:159px;text-align:center;top:685.48px;font-size:13.2px;transform:scale(1.0000,1.1000);transform-origin:50% 11.22px">Copy Bill of Material</div>
<div class="a" style="left:84px;top:710px;width:161px;height:30px;box-sizing:border-box;background:#f0f0f0;border-top:1px solid #fff;border-left:1px solid #fff;border-right:1px solid #696969;border-bottom:1px solid #696969;box-shadow:inset -1px -1px 0 #a0a0a0"></div>
<div class="t" style="left:84px;width:159px;text-align:center;top:718.38px;font-size:13.2px;transform:scale(1.0000,1.1000);transform-origin:50% 11.22px">New Bill of Material</div>
<div class="a" style="left:82px;top:744px;width:161px;height:29px;box-sizing:border-box;background:#f0f0f0;border-top:1px solid #fff;border-left:1px solid #fff;border-right:1px solid #696969;border-bottom:1px solid #696969;box-shadow:inset -1px -1px 0 #a0a0a0"></div>
<div class="t" style="left:82px;width:159px;text-align:center;top:750.98px;font-size:13.2px;transform:scale(1.0000,1.1000);transform-origin:50% 11.22px">Class Create Automation</div>
<div class="a" style="left:84px;top:776px;width:161px;height:30px;box-sizing:border-box;background:#f0f0f0;border-top:1px solid #fff;border-left:1px solid #fff;border-right:1px solid #696969;border-bottom:1px solid #696969;box-shadow:inset -1px -1px 0 #a0a0a0"></div>
<div class="t" style="left:84px;width:159px;text-align:center;top:783.48px;font-size:13.2px;transform:scale(1.0000,1.1000);transform-origin:50% 11.22px">Scale Adjustment</div>
<div class="a" style="left:54px;top:814px;width:34px;height:25px;box-sizing:border-box;background:#f0f0f0;border-top:1px solid #fff;border-left:1px solid #fff;border-right:1px solid #696969;border-bottom:1px solid #696969;box-shadow:inset -1px -1px 0 #a0a0a0"></div>
<svg class="a" style="left:65px;top:820px" width="10" height="11"><rect x="0.5" y="0.5" width="2" height="10" fill="#00008b"/><path d="M9.5 0.5 L2.5 5.5 L9.5 10.5 Z" fill="#8b0000"/></svg>
<div class="a" style="left:92px;top:814px;width:34px;height:25px;box-sizing:border-box;background:#f0f0f0;border-top:1px solid #fff;border-left:1px solid #fff;border-right:1px solid #696969;border-bottom:1px solid #696969;box-shadow:inset -1px -1px 0 #a0a0a0"></div>
<svg class="a" style="left:104px;top:820px" width="7" height="11"><path d="M6.5 0.5 L0 5.5 L6.5 10.5 Z" fill="#8b0000"/></svg>
<div class="a" style="left:128px;top:817px;width:135px;height:20px;box-sizing:border-box;background:#808080;border-top:2px solid #5a5a5a;border-left:1px solid #5a5a5a;border-right:1px solid #fff;border-bottom:1px solid #fff"></div>
<div class="t" style="left:128px;width:135px;text-align:center;top:821.28px;font-size:13.2px;color:#fff">1</div>
<div class="a" style="left:269px;top:814px;width:34px;height:25px;box-sizing:border-box;background:#f0f0f0;border-top:1px solid #fff;border-left:1px solid #fff;border-right:1px solid #696969;border-bottom:1px solid #696969;box-shadow:inset -1px -1px 0 #a0a0a0"></div>
<svg class="a" style="left:283px;top:820px" width="7" height="11"><path d="M0.5 0.5 L6.5 5.5 L0.5 10.5 Z" fill="#8b0000"/></svg>
<div class="a" style="left:307px;top:814px;width:34px;height:25px;box-sizing:border-box;background:#f0f0f0;border-top:1px solid #fff;border-left:1px solid #fff;border-right:1px solid #696969;border-bottom:1px solid #696969;box-shadow:inset -1px -1px 0 #a0a0a0"></div>
<svg class="a" style="left:320px;top:820px" width="10" height="11"><path d="M0.5 0.5 L6.5 5.5 L0.5 10.5 Z" fill="#8b0000"/><rect x="6.5" y="0.5" width="2.2" height="10" fill="#00008b"/></svg>
<div class="t" style="left:146.5px;top:838.52px;font-size:13.5px;transform:scale(1.0000,1.0300);transform-origin:0 11.47px">Review Records</div>
<div class="t" style="left:312.4px;top:618.78px;font-size:13.2px;transform:scale(1.0000,1.0500);transform-origin:0 11.22px">Direct Labour Method Choice</div>
<div class="a" style="left:492px;top:635px;width:199px;height:1px;background:#a0a0a0"></div>
<div class="a" style="left:492px;top:636px;width:199px;height:1px;background:#696969"></div>
<div class="a" style="left:310px;top:635px;width:1px;height:172px;background:#a0a0a0"></div>
<div class="a" style="left:311px;top:636px;width:1px;height:171px;background:#696969"></div>
<div class="a" style="left:691px;top:635px;width:1px;height:173px;background:#fff"></div>
<div class="a" style="left:310px;top:807px;width:382px;height:1px;background:#fff"></div>
<svg class="a" style="left:326px;top:654.5px" width="15" height="15"><circle cx="7.5" cy="7.5" r="6" fill="#fff" stroke="#e6e6e6" stroke-width="1"/><path d="M11.5 3 A6 6 0 0 0 3 11.5" fill="none" stroke="#000" stroke-width="1.3"/></svg>
<div class="t" style="left:347.5px;top:655.78px;font-size:13.2px;transform:scale(1.0000,1.0700);transform-origin:0 11.22px">Use Product Family Default Direct Labour Cost</div>
<svg class="a" style="left:326px;top:681.5px" width="15" height="15"><circle cx="7.5" cy="7.5" r="6" fill="#fff" stroke="#e6e6e6" stroke-width="1"/><path d="M11.5 3 A6 6 0 0 0 3 11.5" fill="none" stroke="#000" stroke-width="1.3"/><circle cx="7.6" cy="8.2" r="2.4" fill="#000"/></svg>
<div class="t" style="left:347.5px;top:682.78px;font-size:13.2px;transform:scale(1.0000,1.0700);transform-origin:0 11.22px">Use Workflow Operations Direct Labour Cost</div>
<div class="a" style="left:446px;top:716px;width:171px;height:30px;box-sizing:border-box;background:#f0f0f0;border-top:1px solid #fff;border-left:1px solid #fff;border-right:1px solid #696969;border-bottom:1px solid #696969;box-shadow:inset -1px -1px 0 #a0a0a0"></div>
<div class="t" style="left:446px;width:169px;text-align:center;top:723.78px;font-size:13.2px;transform:scale(1.0000,1.1000);transform-origin:50% 11.22px">Update Costs</div>
<div class="a" style="left:446px;top:747px;width:171px;height:28px;box-sizing:border-box;background:#f0f0f0;border-top:1px solid #fff;border-left:1px solid #fff;border-right:1px solid #696969;border-bottom:1px solid #696969;box-shadow:inset -1px -1px 0 #a0a0a0"></div>
<div class="t" style="left:446px;width:169px;text-align:center;top:753.98px;font-size:13.2px;transform:scale(1.0000,1.1000);transform-origin:50% 11.22px">View Costing</div>
<div class="t" style="left:651px;top:612.07px;font-size:14.5px;font-weight:bold">Totals:</div>
<div class="a" style="left:703px;top:610px;width:724px;height:79px;box-sizing:border-box;background:#fff;border-top:2px solid #6d6d6d;border-left:2px solid #6d6d6d;border-right:1px solid #fff;border-bottom:1px solid #fff"></div>
<div class="a" style="left:705px;top:612px;width:709px;height:18px;background:#e1e4ea"></div>
<div class="a" style="left:1415px;top:612px;width:11px;height:18px;background:#f3f4fa"></div>
<div class="a" style="left:705px;top:630px;width:23px;height:19px;background:#e1e4ea"></div>
<div class="a" style="left:705px;top:649px;width:23px;height:39px;background:#f3f4fa"></div>
<div class="a" style="left:728px;top:630px;width:686px;height:19px;background:#a6cdf0"></div>
<div class="a" style="left:728px;top:631px;width:136px;height:18px;background:#fff"></div>
<div class="a" style="left:731px;top:632px;width:133px;height:17px;background:#17365d"></div>
<div class="a" style="left:728px;top:630px;width:698px;height:1px;background:#c6c6c6"></div>
<div class="a" style="left:705px;top:649px;width:721px;height:1px;background:#c6c6c6"></div>
<div class="a" style="left:705px;top:668px;width:721px;height:1px;background:#ececec"></div>
<div class="a" style="left:728px;top:630px;width:1px;height:19px;background:#c6c6c6"></div>
<div class="a" style="left:728px;top:650px;width:1px;height:38px;background:#ececec"></div>
<div class="a" style="left:864px;top:630px;width:1px;height:19px;background:#c6c6c6"></div>
<div class="a" style="left:864px;top:650px;width:1px;height:38px;background:#ececec"></div>
<div class="a" style="left:969px;top:630px;width:1px;height:19px;background:#c6c6c6"></div>
<div class="a" style="left:969px;top:650px;width:1px;height:38px;background:#ececec"></div>
<div class="a" style="left:1155px;top:630px;width:1px;height:19px;background:#c6c6c6"></div>
<div class="a" style="left:1155px;top:650px;width:1px;height:38px;background:#ececec"></div>
<div class="a" style="left:1273px;top:630px;width:1px;height:19px;background:#c6c6c6"></div>
<div class="a" style="left:1273px;top:650px;width:1px;height:38px;background:#ececec"></div>
<div class="a" style="left:1414px;top:630px;width:1px;height:19px;background:#c6c6c6"></div>
<div class="a" style="left:1414px;top:650px;width:1px;height:38px;background:#ececec"></div>
<div class="a" style="left:864px;top:612px;width:1px;height:18px;background:#c6c6c6"></div>
<div class="a" style="left:969px;top:612px;width:1px;height:18px;background:#c6c6c6"></div>
<div class="a" style="left:1155px;top:612px;width:1px;height:18px;background:#c6c6c6"></div>
<div class="a" style="left:1273px;top:612px;width:1px;height:18px;background:#c6c6c6"></div>
<div class="a" style="left:1414px;top:612px;width:1px;height:18px;background:#c6c6c6"></div>
<svg class="a" style="left:713px;top:615px" width="12" height="12"><path d="M11.5 0.5 L11.5 11 L0.5 11 Z" fill="url(#cg)"/><path d="M11.5 0.5 L0.5 11.5" stroke="#a9c6ee" stroke-width="1"/></svg>
<div class="t" style="left:728px;width:118px;text-align:center;top:613.63px;font-size:14.9px;color:#333">Weight Total</div>
<svg class="a" style="left:848px;top:621px" width="9" height="6"><path d="M0.5 0.5 H8.5 L4.5 4.5 Z" fill="#333"/></svg>
<div class="t" style="left:864px;width:87px;text-align:center;top:613.63px;font-size:14.9px;color:#333">Cost</div>
<svg class="a" style="left:953px;top:621px" width="9" height="6"><path d="M0.5 0.5 H8.5 L4.5 4.5 Z" fill="#333"/></svg>
<div class="t" style="left:969px;width:168px;text-align:center;top:613.63px;font-size:14.9px;color:#333">Item Net Weight</div>
<svg class="a" style="left:1139px;top:621px" width="9" height="6"><path d="M0.5 0.5 H8.5 L4.5 4.5 Z" fill="#333"/></svg>
<div class="t" style="left:1155px;width:100px;text-align:center;top:613.63px;font-size:14.9px;color:#333">Yield</div>
<svg class="a" style="left:1257px;top:621px" width="9" height="6"><path d="M0.5 0.5 H8.5 L4.5 4.5 Z" fill="#333"/></svg>
<div class="t" style="left:1273px;width:123px;text-align:center;top:613.63px;font-size:14.9px;color:#333">Unit Cost</div>
<svg class="a" style="left:1398px;top:621px" width="9" height="6"><path d="M0.5 0.5 H8.5 L4.5 4.5 Z" fill="#333"/></svg>
<div class="t" style="right:685px;top:633.70px;font-size:14.0px;color:#fff;transform:scale(1.0000,1.0700);transform-origin:100% 11.90px">11.286</div>
<div class="t" style="right:581px;top:633.70px;font-size:14.0px;transform:scale(1.0000,1.0700);transform-origin:100% 11.90px">$88.04</div>
<div class="t" style="right:394.29999999999995px;top:633.70px;font-size:14.0px;transform:scale(1.0000,1.0700);transform-origin:100% 11.90px">460</div>
<div class="t" style="left:1155px;width:118px;text-align:center;top:633.70px;font-size:14.0px;transform:scale(1.0000,1.0700);transform-origin:50% 11.90px">97.82%</div>
<div class="t" style="right:136px;top:633.70px;font-size:14.0px;transform:scale(1.0000,1.0700);transform-origin:100% 11.90px">$3.67</div>
<div class="t" style="left:716px;top:711.51px;font-size:14.1px;font-weight:bold;transform:scale(1.0000,1.1000);transform-origin:0 11.98px">Notes:</div>
<div class="a" style="left:1096px;top:697px;width:155px;height:29px;box-sizing:border-box;background:#f0f0f0;border-top:1px solid #fff;border-left:1px solid #fff;border-right:1px solid #696969;border-bottom:1px solid #696969;box-shadow:inset -1px -1px 0 #a0a0a0"></div>
<div class="t" style="left:1096px;width:153px;text-align:center;top:704.28px;font-size:13.2px;transform:scale(1.0000,1.1000);transform-origin:50% 11.22px">Allow Changes</div>
<div class="a" style="left:1257px;top:696px;width:171px;height:29px;box-sizing:border-box;background:#f0f0f0;border-top:1px solid #fff;border-left:1px solid #fff;border-right:1px solid #696969;border-bottom:1px solid #696969;box-shadow:inset -1px -1px 0 #a0a0a0"></div>
<div class="t" style="left:1257px;width:169px;text-align:center;top:703.28px;font-size:13.2px;transform:scale(1.0000,1.1000);transform-origin:50% 11.22px">Save Record</div>
<div class="a" style="left:710px;top:733px;width:719px;height:78px;box-sizing:border-box;background:#fff;border-top:1px solid #6d6d6d;border-left:1px solid #6d6d6d;border-right:1px solid #fff;border-bottom:1px solid #fff;box-shadow:inset 1px 1px 0 #a0a0a0,inset -1px -1px 0 #e3e3e3"></div>
<div class="t" style="left:713px;top:736.70px;font-size:13.3px;transform:scale(1.0000,1.1000);transform-origin:0 11.30px">Complete - Verified</div>
</body></html>
